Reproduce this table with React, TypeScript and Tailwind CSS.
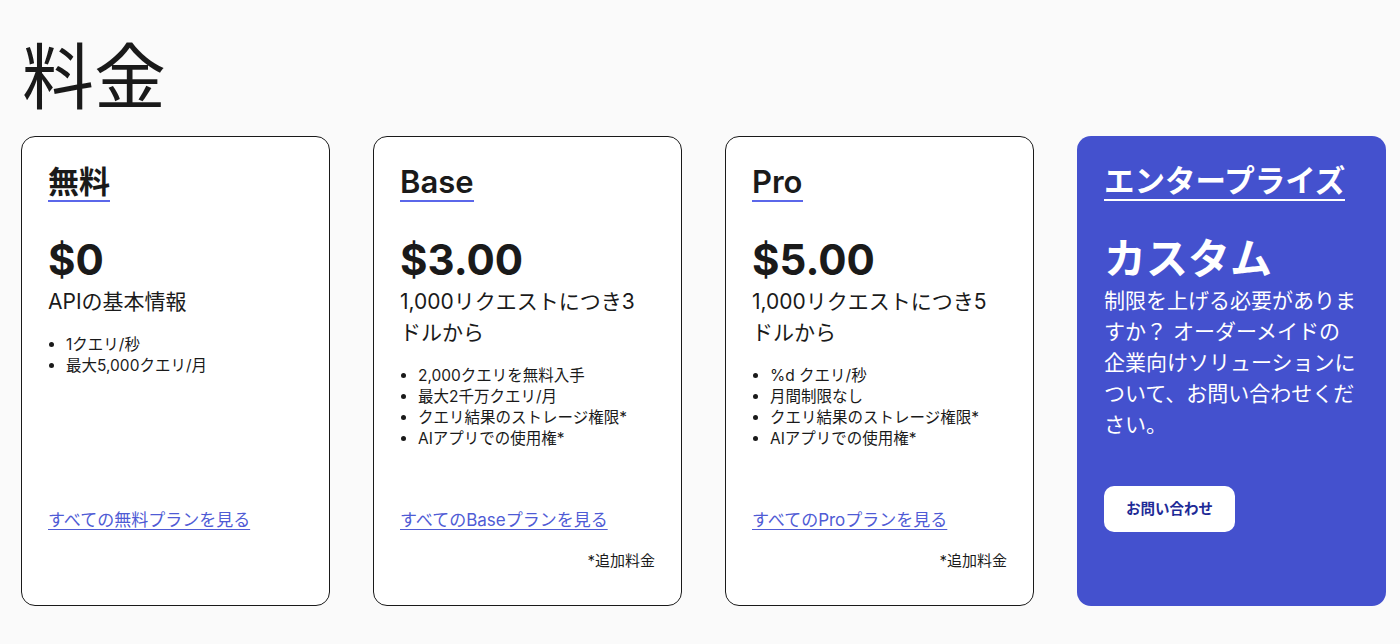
const plans = [
  {
    name: "無料",
    price: "$0",
    desc: "APIの基本情報",
    features: ["1クエリ/秒", "最大5,000クエリ/月"],
    link: "すべての無料プランを見る",
    note: false,
  },
  {
    name: "Base",
    price: "$3.00",
    desc: "1,000リクエストにつき3ドルから",
    features: ["2,000クエリを無料入手", "最大2千万クエリ/月", "クエリ結果のストレージ権限*", "AIアプリでの使用権*"],
    link: "すべてのBaseプランを見る",
    note: true,
  },
  {
    name: "Pro",
    price: "$5.00",
    desc: "1,000リクエストにつき5ドルから",
    features: ["%d クエリ/秒", "月間制限なし", "クエリ結果のストレージ権限*", "AIアプリでの使用権*"],
    link: "すべてのProプランを見る",
    note: true,
  },
];

export default function App() {
  return (
    <div
      className="min-h-screen bg-[#fafafa] text-[#1a1a1a] px-[21px] pt-[41px]"
      style={{ fontFamily: 'Inter, "Noto Sans CJK JP", sans-serif' }}
    >
      <h1 className="text-[72px] leading-[72px] font-normal ml-[1px] mb-[23px]">料金</h1>

      <div className="grid grid-cols-[repeat(4,309px)] gap-[43px]">
        {plans.map((p) => (
          <div
            key={p.name}
            className="h-[470px] flex flex-col bg-white border border-[#1a1a1a] rounded-[14px] px-[26px] pt-[27px] pb-[34px]"
          >
            <div>
              <h2 className="inline-block text-[31px] leading-[36px] font-semibold border-b-2 border-[#5b67ea]">
                {p.name}
              </h2>
            </div>
            <div className="mt-[32px] text-[42px] leading-[52px] font-bold">{p.price}</div>
            <p className="text-[21px] leading-[31px]">{p.desc}</p>
            <ul className="mt-[17px] list-disc pl-[18px] text-[15.5px] leading-[21px]">
              {p.features.map((f) => (
                <li key={f}>{f}</li>
              ))}
            </ul>
            <div className="mt-auto">
              <a href="#" className="text-[17px] leading-[24px] text-[#4f5bd5] underline underline-offset-[3px]">
                {p.link}
              </a>
              <p className={`mt-[18px] text-right text-[15px] leading-[21px] ${p.note ? "" : "invisible"}`}>
                *追加料金
              </p>
            </div>
          </div>
        ))}

        <div className="h-[470px] flex flex-col bg-[#4451ce] text-white rounded-[14px] px-[27px] pt-[27px]">
          <div>
            <h2 className="inline-block text-[30.5px] leading-[36px] font-semibold border-b-2 border-white">
              エンタープライズ
            </h2>
          </div>
          <div className="mt-[32px] text-[42px] leading-[52px] font-bold">カスタム</div>
          <p className="text-[21px] leading-[31px]">
            制限を上げる必要がありますか？ オーダーメイドの企業向けソリューションについて、お問い合わせください。
          </p>
          <div className="mt-[46px]">
            <button className="h-[46px] px-[22px] bg-white rounded-[10px] text-[#1e2b97] text-[14.5px] font-bold">
              お問い合わせ
            </button>
          </div>
        </div>
      </div>
    </div>
  );
}
